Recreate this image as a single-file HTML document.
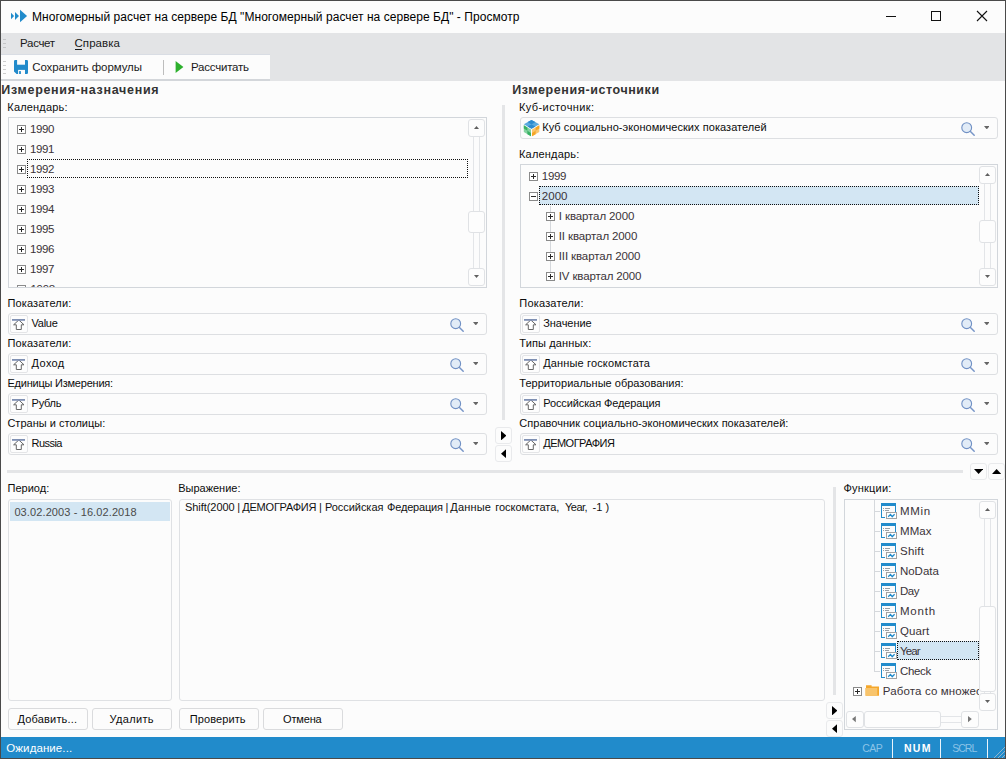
<!DOCTYPE html>
<html><head><meta charset="utf-8"><title>Многомерный расчет на сервере БД</title>
<style>
html,body{margin:0;padding:0;}
body{width:1006px;height:759px;overflow:hidden;background:#fcfcfc;position:relative;
 font-family:"Liberation Sans",sans-serif;font-size:11px;color:#0c0c0c;}
div,span,svg{position:absolute;box-sizing:border-box;}
.t{white-space:nowrap;line-height:14px;height:14px;}
.title{left:0;top:0;width:1006px;height:33px;background:#fcfcfc;}
.menu{left:0;top:33px;width:1006px;height:22px;background:#e3e4e6;}
.tbgrey{left:0;top:54px;width:1006px;height:27px;background:#e3e4e6;}
.tbwhite{left:1px;top:55px;width:269px;height:24px;background:#fcfcfc;}
.tbline{left:1px;top:79px;width:269px;height:2px;background:#d3d6da;}
.tbtop{left:1px;top:54px;width:269px;height:1px;background:#d9dde4;}
.frame{left:0;top:0;width:1006px;height:759px;border:1px solid #4a4a4a;}
.box{border:1px solid #d2d6db;background:#fcfcfc;}
.combo{border:1px solid #dddfe2;background:#fcfcfc;border-radius:3px;height:22px;}
.ib{width:18px;height:18px;border:1px solid #e4e5e7;border-radius:2px;background:#fdfdfd;}
.btn{border:1px solid #dadbdd;background:#fcfcfc;border-radius:3px;height:22px;}
.sb{border:1px solid #e0e2e5;background:#fdfdfd;border-radius:3px;}
.sb2{border:1px solid #e9eaec;background:#fcfcfc;border-radius:3px;}
.trk{background:#e3e5e8;}
.exp{width:9px;height:9px;border:1px solid #8a8a8a;background:#fff;}
.exp i{position:absolute;left:1px;top:3px;width:5px;height:1px;background:#2a2a2a;}
.exp b{position:absolute;left:3px;top:1px;width:1px;height:5px;background:#2a2a2a;}
.status{left:0;top:737px;width:1006px;height:22px;background:#218bcb;}
.hd{font-weight:bold;color:#333;}
.sel{background:#d3e6f3;}
.focus{border:1px dotted #111;}
.spl{background:#e4e5e7;}
.tr{color:#3a3338;}
.vdot{width:1px;background:#d5d8dc;}
.hdot{height:1px;background:#d5d8dc;}
</style></head>
<body>
<div class="title"></div><div class="menu"></div><div class="tbgrey"></div><div class="tbwhite"></div><div class="tbline"></div><div class="tbtop"></div>
<svg style="left:10px;top:9px" width="18" height="14" viewBox="10 9 18 14"><g fill="#218bcb"><path d="M11 12.8 L14.1 16 L11 19.2Z"/><path d="M15 11.9 L19 16 L15 20.1Z"/><path d="M20 9.8 L27.1 16 L20 22.2Z"/></g></svg>
<div class="t " style="left:32.0px;top:10px;font-size:12px;letter-spacing:0.05px;color:#000;">Многомерный расчет на сервере БД "Многомерный расчет на сервере БД" - Просмотр</div>
<div style="left:886px;top:16px;width:10px;height:1px;background:#111"></div>
<div style="left:931px;top:11px;width:10px;height:10px;border:1px solid #111"></div>
<svg style="left:976px;top:10px" width="12" height="12" viewBox="0 0 12 12"><path d="M1 1 L11 11 M11 1 L1 11" stroke="#111" stroke-width="1.1" fill="none"/></svg>
<div style="left:3px;top:39px;width:3px;height:1px;background:#c4c5c7"></div>
<div style="left:3px;top:43px;width:3px;height:1px;background:#c4c5c7"></div>
<div style="left:3px;top:47px;width:3px;height:1px;background:#c4c5c7"></div>
<div class="t " style="left:20.1px;top:36px;font-size:11.5px;letter-spacing:-0.32px;color:#1a1a1a;">Расчет</div>
<div class="t " style="left:74.5px;top:36px;font-size:11.5px;letter-spacing:0.05px;color:#1a1a1a;">Справка</div>
<div style="left:75px;top:49px;width:7px;height:1px;background:#1a1a1a"></div>
<div style="left:3px;top:61px;width:3px;height:1px;background:#cdcdcd"></div>
<div style="left:3px;top:65px;width:3px;height:1px;background:#cdcdcd"></div>
<div style="left:3px;top:69px;width:3px;height:1px;background:#cdcdcd"></div>
<div style="left:3px;top:73px;width:3px;height:1px;background:#cdcdcd"></div>
<svg style="left:14px;top:60px" width="14" height="14" viewBox="0 0 14 14"><path d="M1.2 0 H12.8 Q14 0 14 1.2 V12.8 Q14 14 12.8 14 H2.6 L0 11.4 V1.2 Q0 0 1.2 0Z" fill="#228bcb"/><rect x="3.1" y="0" width="7.9" height="4.7" fill="#fcfcfc"/><rect x="4.1" y="9.9" width="6.9" height="4.1" fill="#fcfcfc"/><rect x="5.1" y="11.1" width="1.8" height="2.9" fill="#228bcb"/></svg>
<div class="t " style="left:32.2px;top:59.5px;font-size:11.5px;letter-spacing:-0.08px;color:#1a1a1a;">Сохранить формулы</div>
<div style="left:163px;top:60px;width:1px;height:15px;background:#bdbdbd"></div>
<svg style="left:175px;top:61px" width="9" height="12" viewBox="0 0 9 12"><path d="M0.6 0 L8.4 6 L0.6 12Z" fill="#2db02d"/></svg>
<div class="t " style="left:191.0px;top:59.5px;font-size:11.5px;letter-spacing:-0.22px;color:#1a1a1a;">Рассчитать</div>
<div class="t hd" style="left:1.3px;top:82.5px;font-size:12.5px;letter-spacing:0.69px;">Измерения-назначения</div>
<div class="t " style="left:7.3px;top:99.5px;letter-spacing:0.18px;">Календарь:</div>
<div class="box" style="left:8px;top:117px;width:479px;height:171px;overflow:hidden"></div>
<div class="exp" style="left:17px;top:125px"><i></i><b></b></div>
<div class="t tr" style="left:30.1px;top:122px;font-size:11.5px;letter-spacing:-0.4px;">1990</div>
<div class="exp" style="left:17px;top:145px"><i></i><b></b></div>
<div class="t tr" style="left:30.1px;top:142px;font-size:11.5px;letter-spacing:-0.4px;">1991</div>
<div class="exp" style="left:17px;top:165px"><i></i><b></b></div>
<div class="t tr" style="left:30.1px;top:162px;font-size:11.5px;letter-spacing:-0.4px;">1992</div>
<div class="exp" style="left:17px;top:185px"><i></i><b></b></div>
<div class="t tr" style="left:30.1px;top:182px;font-size:11.5px;letter-spacing:-0.4px;">1993</div>
<div class="exp" style="left:17px;top:205px"><i></i><b></b></div>
<div class="t tr" style="left:30.1px;top:202px;font-size:11.5px;letter-spacing:-0.4px;">1994</div>
<div class="exp" style="left:17px;top:225px"><i></i><b></b></div>
<div class="t tr" style="left:30.1px;top:222px;font-size:11.5px;letter-spacing:-0.4px;">1995</div>
<div class="exp" style="left:17px;top:245px"><i></i><b></b></div>
<div class="t tr" style="left:30.1px;top:242px;font-size:11.5px;letter-spacing:-0.4px;">1996</div>
<div class="exp" style="left:17px;top:265px"><i></i><b></b></div>
<div class="t tr" style="left:30.1px;top:262px;font-size:11.5px;letter-spacing:-0.4px;">1997</div>
<div style="left:9px;top:281px;width:455px;height:6px;overflow:hidden"><div class="exp" style="left:8px;top:4px"><i></i><b></b></div><div class="t tr" style="left:21.5px;top:1px;font-size:11.5px;letter-spacing:-0.3px">1998</div></div>
<div class="focus" style="left:27px;top:159px;width:441px;height:19px"></div>
<div class="trk" style="left:473px;top:136px;width:1px;height:133px"></div>
<div class="trk" style="left:479px;top:136px;width:1px;height:133px"></div>
<div class="sb" style="left:468px;top:119px;width:17px;height:18px"></div>
<svg style="left:474px;top:126px" width="5" height="3" viewBox="0 0 5 3"><polygon points="0,3 2.5,0 5,3" fill="#606060"/></svg>
<div class="sb" style="left:468px;top:268px;width:17px;height:18px"></div>
<svg style="left:474px;top:275px" width="5" height="3" viewBox="0 0 5 3"><polygon points="0,0 5,0 2.5,3" fill="#606060"/></svg>
<div class="sb" style="left:468px;top:211px;width:17px;height:22px"></div>
<div class="t " style="left:7.4px;top:296px;letter-spacing:0.16px;">Показатели:</div>
<div class="combo" style="left:8px;top:313px;width:479px"></div>
<div class="ib" style="left:10px;top:315px"></div>
<svg style="left:10px;top:315px" width="18" height="18" viewBox="0 0 18 18"><path d="M8.8 5 L14 9.8 H11.3 V14.5 H6.3 V9.8 H3.6Z" fill="#fff" stroke="#666" stroke-width="1" stroke-linejoin="miter"/><rect x="2" y="4" width="13" height="1.8" fill="#7f90b3"/></svg>
<svg style="left:450px;top:318px" width="15" height="15" viewBox="0 0 15 15"><path d="M9.2 9.2 L13.2 13.2" stroke="#7896c8" stroke-width="1.5" stroke-linecap="round"/><circle cx="5.7" cy="5.7" r="4.9" fill="#e2ecf7" stroke="#7090c4" stroke-width="1.1"/></svg>
<svg style="left:472.8px;top:321.9px" width="5.6" height="3.4" viewBox="0 0 5.6 3.4"><polygon points="0,0 5.6,0 2.8,3.4" fill="#666"/></svg>
<div class="t " style="left:31.6px;top:316px;letter-spacing:-0.28px;">Value</div>
<div class="t " style="left:7.4px;top:336px;letter-spacing:0.16px;">Показатели:</div>
<div class="combo" style="left:8px;top:353px;width:479px"></div>
<div class="ib" style="left:10px;top:355px"></div>
<svg style="left:10px;top:355px" width="18" height="18" viewBox="0 0 18 18"><path d="M8.8 5 L14 9.8 H11.3 V14.5 H6.3 V9.8 H3.6Z" fill="#fff" stroke="#666" stroke-width="1" stroke-linejoin="miter"/><rect x="2" y="4" width="13" height="1.8" fill="#7f90b3"/></svg>
<svg style="left:450px;top:358px" width="15" height="15" viewBox="0 0 15 15"><path d="M9.2 9.2 L13.2 13.2" stroke="#7896c8" stroke-width="1.5" stroke-linecap="round"/><circle cx="5.7" cy="5.7" r="4.9" fill="#e2ecf7" stroke="#7090c4" stroke-width="1.1"/></svg>
<svg style="left:472.8px;top:361.9px" width="5.6" height="3.4" viewBox="0 0 5.6 3.4"><polygon points="0,0 5.6,0 2.8,3.4" fill="#666"/></svg>
<div class="t " style="left:31.6px;top:356px;letter-spacing:0.36px;">Доход</div>
<div class="t " style="left:7.4px;top:376px;letter-spacing:-0.22px;">Единицы Измерения:</div>
<div class="combo" style="left:8px;top:393px;width:479px"></div>
<div class="ib" style="left:10px;top:395px"></div>
<svg style="left:10px;top:395px" width="18" height="18" viewBox="0 0 18 18"><path d="M8.8 5 L14 9.8 H11.3 V14.5 H6.3 V9.8 H3.6Z" fill="#fff" stroke="#666" stroke-width="1" stroke-linejoin="miter"/><rect x="2" y="4" width="13" height="1.8" fill="#7f90b3"/></svg>
<svg style="left:450px;top:398px" width="15" height="15" viewBox="0 0 15 15"><path d="M9.2 9.2 L13.2 13.2" stroke="#7896c8" stroke-width="1.5" stroke-linecap="round"/><circle cx="5.7" cy="5.7" r="4.9" fill="#e2ecf7" stroke="#7090c4" stroke-width="1.1"/></svg>
<svg style="left:472.8px;top:401.9px" width="5.6" height="3.4" viewBox="0 0 5.6 3.4"><polygon points="0,0 5.6,0 2.8,3.4" fill="#666"/></svg>
<div class="t " style="left:31.6px;top:396px;letter-spacing:-0.26px;">Рубль</div>
<div class="t " style="left:7.4px;top:416px;letter-spacing:0.02px;">Страны и столицы:</div>
<div class="combo" style="left:8px;top:433px;width:479px"></div>
<div class="ib" style="left:10px;top:435px"></div>
<svg style="left:10px;top:435px" width="18" height="18" viewBox="0 0 18 18"><path d="M8.8 5 L14 9.8 H11.3 V14.5 H6.3 V9.8 H3.6Z" fill="#fff" stroke="#666" stroke-width="1" stroke-linejoin="miter"/><rect x="2" y="4" width="13" height="1.8" fill="#7f90b3"/></svg>
<svg style="left:450px;top:438px" width="15" height="15" viewBox="0 0 15 15"><path d="M9.2 9.2 L13.2 13.2" stroke="#7896c8" stroke-width="1.5" stroke-linecap="round"/><circle cx="5.7" cy="5.7" r="4.9" fill="#e2ecf7" stroke="#7090c4" stroke-width="1.1"/></svg>
<svg style="left:472.8px;top:441.9px" width="5.6" height="3.4" viewBox="0 0 5.6 3.4"><polygon points="0,0 5.6,0 2.8,3.4" fill="#666"/></svg>
<div class="t " style="left:31.6px;top:436px;letter-spacing:-0.55px;">Russia</div>
<div class="spl" style="left:502px;top:105px;width:3px;height:315px"></div>
<div class="spl" style="left:7px;top:470px;width:956px;height:3px"></div>
<div class="sb2" style="left:495px;top:427px;width:17px;height:17px"></div>
<svg style="left:500.8px;top:430.8px" width="5.4" height="9.4" viewBox="0 0 5.4 9.4"><polygon points="0,0 5.4,4.7 0,9.4" fill="#000"/></svg>
<div class="sb2" style="left:495px;top:445px;width:17px;height:17px"></div>
<svg style="left:500.8px;top:448.8px" width="5.4" height="9.4" viewBox="0 0 5.4 9.4"><polygon points="5.4,0 0,4.7 5.4,9.4" fill="#000"/></svg>
<div class="sb2" style="left:970px;top:463px;width:17px;height:17px"></div>
<svg style="left:974px;top:469px" width="9.2" height="5" viewBox="0 0 9.2 5"><polygon points="0,0 9.2,0 4.6,5" fill="#000"/></svg>
<div class="sb2" style="left:988px;top:463px;width:17px;height:17px"></div>
<svg style="left:992px;top:469px" width="9.2" height="5" viewBox="0 0 9.2 5"><polygon points="0,5 4.6,0 9.2,5" fill="#000"/></svg>
<div class="t hd" style="left:512.3px;top:82.5px;font-size:12.5px;letter-spacing:0.56px;">Измерения-источники</div>
<div class="t " style="left:519.0px;top:99.5px;letter-spacing:0.4px;">Куб-источник:</div>
<div class="combo" style="left:520px;top:117px;width:478px"></div>
<svg style="left:961px;top:122px" width="15" height="15" viewBox="0 0 15 15"><path d="M9.2 9.2 L13.2 13.2" stroke="#7896c8" stroke-width="1.5" stroke-linecap="round"/><circle cx="5.7" cy="5.7" r="4.9" fill="#e2ecf7" stroke="#7090c4" stroke-width="1.1"/></svg>
<svg style="left:983.8px;top:125.9px" width="5.6" height="3.4" viewBox="0 0 5.6 3.4"><polygon points="0,0 5.6,0 2.8,3.4" fill="#666"/></svg>
<svg style="left:523px;top:119px" width="17" height="18" viewBox="523 119 17 18"><polygon points="531.5,120 539.3,124.3 531.5,128.8 523.8,124.3" fill="#5aaade"/><polygon points="523.8,125.2 531,129.6 531,136.3 523.8,132" fill="#84d2a0"/><polygon points="532,129.6 539.3,125.2 539.3,132 532,136.3" fill="#f9c670"/><polygon points="531.5,120 535.4,122.1 531.5,124.4 527.6,122.1" fill="#2c8bcf"/><polygon points="531.5,124.4 535.4,126.5 531.5,128.8 527.6,126.5" fill="#2c8bcf"/><polygon points="523.8,125.2 527.4,127.4 527.4,130.8 523.8,128.6" fill="#37b264"/><polygon points="527.4,130.8 531,133 531,136.3 527.4,134.2" fill="#37b264"/><polygon points="535.6,127.4 539.3,125.2 539.3,128.6 535.6,130.8" fill="#f5a626"/><polygon points="532,133 535.6,130.8 535.6,134.2 532,136.3" fill="#f5a626"/></svg>
<div class="t " style="left:542.2px;top:119.69999999999999px;letter-spacing:0.05px;">Куб социально-экономических показателей</div>
<div class="t " style="left:519.0px;top:147px;letter-spacing:0.18px;">Календарь:</div>
<div class="box" style="left:520px;top:164px;width:478px;height:124px"></div>
<div class="sel" style="left:539px;top:186px;width:440px;height:19px"></div>
<div class="focus" style="left:539px;top:186px;width:440px;height:19px"></div>
<div class="exp" style="left:529px;top:172px"><i></i><b></b></div>
<div class="t tr" style="left:541.8px;top:169px;font-size:11.5px;letter-spacing:-0.3px;">1999</div>
<div class="exp" style="left:529px;top:192px"><i></i></div>
<div class="t tr" style="left:541.8px;top:189px;font-size:11.5px;letter-spacing:0.04px;">2000</div>
<div class="vdot" style="left:550px;top:206px;height:71px"></div>
<div class="exp" style="left:546px;top:212px"><i></i><b></b></div>
<div class="t tr" style="left:558.8px;top:209px;font-size:11.5px;letter-spacing:-0.11px;">I квартал 2000</div>
<div class="exp" style="left:546px;top:232px"><i></i><b></b></div>
<div class="t tr" style="left:558.8px;top:229px;font-size:11.5px;letter-spacing:-0.12px;">II квартал 2000</div>
<div class="exp" style="left:546px;top:252px"><i></i><b></b></div>
<div class="t tr" style="left:558.8px;top:249px;font-size:11.5px;letter-spacing:-0.12px;">III квартал 2000</div>
<div class="exp" style="left:546px;top:272px"><i></i><b></b></div>
<div class="t tr" style="left:558.8px;top:269px;font-size:11.5px;letter-spacing:-0.14px;">IV квартал 2000</div>
<div class="trk" style="left:984px;top:183px;width:1px;height:86px"></div>
<div class="trk" style="left:990px;top:183px;width:1px;height:86px"></div>
<div class="sb" style="left:979px;top:166px;width:17px;height:18px"></div>
<svg style="left:985px;top:173px" width="5" height="3" viewBox="0 0 5 3"><polygon points="0,3 2.5,0 5,3" fill="#606060"/></svg>
<div class="sb" style="left:979px;top:268px;width:17px;height:18px"></div>
<svg style="left:985px;top:275px" width="5" height="3" viewBox="0 0 5 3"><polygon points="0,0 5,0 2.5,3" fill="#606060"/></svg>
<div class="sb" style="left:979px;top:220px;width:17px;height:23px"></div>
<div class="t " style="left:519.3px;top:296px;letter-spacing:0.19px;">Показатели:</div>
<div class="combo" style="left:520px;top:313px;width:478px"></div>
<div class="ib" style="left:522px;top:315px"></div>
<svg style="left:522px;top:315px" width="18" height="18" viewBox="0 0 18 18"><path d="M8.8 5 L14 9.8 H11.3 V14.5 H6.3 V9.8 H3.6Z" fill="#fff" stroke="#666" stroke-width="1" stroke-linejoin="miter"/><rect x="2" y="4" width="13" height="1.8" fill="#7f90b3"/></svg>
<svg style="left:961px;top:318px" width="15" height="15" viewBox="0 0 15 15"><path d="M9.2 9.2 L13.2 13.2" stroke="#7896c8" stroke-width="1.5" stroke-linecap="round"/><circle cx="5.7" cy="5.7" r="4.9" fill="#e2ecf7" stroke="#7090c4" stroke-width="1.1"/></svg>
<svg style="left:983.8px;top:321.9px" width="5.6" height="3.4" viewBox="0 0 5.6 3.4"><polygon points="0,0 5.6,0 2.8,3.4" fill="#666"/></svg>
<div class="t " style="left:543.2px;top:316px;letter-spacing:-0.05px;">Значение</div>
<div class="t " style="left:519.3px;top:336px;letter-spacing:0.14px;">Типы данных:</div>
<div class="combo" style="left:520px;top:353px;width:478px"></div>
<div class="ib" style="left:522px;top:355px"></div>
<svg style="left:522px;top:355px" width="18" height="18" viewBox="0 0 18 18"><path d="M8.8 5 L14 9.8 H11.3 V14.5 H6.3 V9.8 H3.6Z" fill="#fff" stroke="#666" stroke-width="1" stroke-linejoin="miter"/><rect x="2" y="4" width="13" height="1.8" fill="#7f90b3"/></svg>
<svg style="left:961px;top:358px" width="15" height="15" viewBox="0 0 15 15"><path d="M9.2 9.2 L13.2 13.2" stroke="#7896c8" stroke-width="1.5" stroke-linecap="round"/><circle cx="5.7" cy="5.7" r="4.9" fill="#e2ecf7" stroke="#7090c4" stroke-width="1.1"/></svg>
<svg style="left:983.8px;top:361.9px" width="5.6" height="3.4" viewBox="0 0 5.6 3.4"><polygon points="0,0 5.6,0 2.8,3.4" fill="#666"/></svg>
<div class="t " style="left:543.2px;top:356px;letter-spacing:0.15px;">Данные госкомстата</div>
<div class="t " style="left:519.3px;top:376px;letter-spacing:0.01px;">Территориальные образования:</div>
<div class="combo" style="left:520px;top:393px;width:478px"></div>
<div class="ib" style="left:522px;top:395px"></div>
<svg style="left:522px;top:395px" width="18" height="18" viewBox="0 0 18 18"><path d="M8.8 5 L14 9.8 H11.3 V14.5 H6.3 V9.8 H3.6Z" fill="#fff" stroke="#666" stroke-width="1" stroke-linejoin="miter"/><rect x="2" y="4" width="13" height="1.8" fill="#7f90b3"/></svg>
<svg style="left:961px;top:398px" width="15" height="15" viewBox="0 0 15 15"><path d="M9.2 9.2 L13.2 13.2" stroke="#7896c8" stroke-width="1.5" stroke-linecap="round"/><circle cx="5.7" cy="5.7" r="4.9" fill="#e2ecf7" stroke="#7090c4" stroke-width="1.1"/></svg>
<svg style="left:983.8px;top:401.9px" width="5.6" height="3.4" viewBox="0 0 5.6 3.4"><polygon points="0,0 5.6,0 2.8,3.4" fill="#666"/></svg>
<div class="t " style="left:543.2px;top:396px;letter-spacing:-0.11px;">Российская Федерация</div>
<div class="t " style="left:519.3px;top:416px;letter-spacing:0.03px;">Справочник социально-экономических показателей:</div>
<div class="combo" style="left:520px;top:433px;width:478px"></div>
<div class="ib" style="left:522px;top:435px"></div>
<svg style="left:522px;top:435px" width="18" height="18" viewBox="0 0 18 18"><path d="M8.8 5 L14 9.8 H11.3 V14.5 H6.3 V9.8 H3.6Z" fill="#fff" stroke="#666" stroke-width="1" stroke-linejoin="miter"/><rect x="2" y="4" width="13" height="1.8" fill="#7f90b3"/></svg>
<svg style="left:961px;top:438px" width="15" height="15" viewBox="0 0 15 15"><path d="M9.2 9.2 L13.2 13.2" stroke="#7896c8" stroke-width="1.5" stroke-linecap="round"/><circle cx="5.7" cy="5.7" r="4.9" fill="#e2ecf7" stroke="#7090c4" stroke-width="1.1"/></svg>
<svg style="left:983.8px;top:441.9px" width="5.6" height="3.4" viewBox="0 0 5.6 3.4"><polygon points="0,0 5.6,0 2.8,3.4" fill="#666"/></svg>
<div class="t " style="left:543.2px;top:436px;letter-spacing:-0.51px;">ДЕМОГРАФИЯ</div>
<div class="t " style="left:7.5px;top:481px;letter-spacing:0.01px;">Период:</div>
<div class="box" style="left:8px;top:499px;width:164px;height:202px;border-radius:3px;border-color:#dfe1e4"></div>
<div class="sel" style="left:10px;top:502px;width:160px;height:19px"></div>
<div class="t " style="left:14.4px;top:505px;letter-spacing:0.11px;color:#4a4a4a;">03.02.2003 - 16.02.2018</div>
<div class="t " style="left:178.2px;top:481px;letter-spacing:-0.01px;">Выражение:</div>
<div class="box" style="left:179px;top:499px;width:646px;height:202px;border-radius:3px;border-color:#dfe1e4"></div>
<div class="t " style="left:185.0px;top:500px;letter-spacing:-0.05px;color:#111;">Shift(2000</div>
<div class="t " style="left:237.2px;top:500px;color:#111;">|</div>
<div class="t " style="left:242.3px;top:500px;letter-spacing:-0.23px;color:#111;">ДЕМОГРАФИЯ</div>
<div class="t " style="left:319.0px;top:500px;color:#111;">|</div>
<div class="t " style="left:324.9px;top:500px;letter-spacing:-0.04px;color:#111;">Российская</div>
<div class="t " style="left:387.1px;top:500px;letter-spacing:-0.19px;color:#111;">Федерация</div>
<div class="t " style="left:445.4px;top:500px;color:#111;">|</div>
<div class="t " style="left:450.3px;top:500px;letter-spacing:0.17px;color:#111;">Данные</div>
<div class="t " style="left:495.2px;top:500px;letter-spacing:-0.02px;color:#111;">госкомстата,</div>
<div class="t " style="left:565.1px;top:500px;letter-spacing:-0.57px;color:#111;">Year,</div>
<div class="t " style="left:592.5px;top:500px;letter-spacing:0.02px;color:#111;">-1</div>
<div class="t " style="left:605.5px;top:500px;color:#111;">)</div>
<div class="btn" style="left:8px;top:708px;width:80px"></div>
<div class="t " style="left:17.4px;top:712px;letter-spacing:0.19px;">Добавить...</div>
<div class="btn" style="left:92px;top:708px;width:80px"></div>
<div class="t " style="left:109.5px;top:712px;letter-spacing:0.33px;">Удалить</div>
<div class="btn" style="left:179px;top:708px;width:80px"></div>
<div class="t " style="left:189.7px;top:712px;letter-spacing:0.11px;">Проверить</div>
<div class="btn" style="left:263px;top:708px;width:80px"></div>
<div class="t " style="left:283.1px;top:712px;letter-spacing:-0.17px;">Отмена</div>
<div class="spl" style="left:833px;top:487px;width:3px;height:208px"></div>
<div class="sb2" style="left:826px;top:702px;width:17px;height:17px"></div>
<svg style="left:831.8px;top:705.8px" width="5.4" height="9.4" viewBox="0 0 5.4 9.4"><polygon points="0,0 5.4,4.7 0,9.4" fill="#000"/></svg>
<div class="sb2" style="left:826px;top:720px;width:17px;height:17px"></div>
<svg style="left:831.8px;top:723.7px" width="5.4" height="9.4" viewBox="0 0 5.4 9.4"><polygon points="5.4,0 0,4.7 5.4,9.4" fill="#000"/></svg>
<div class="t " style="left:843.5px;top:481px;letter-spacing:0.2px;">Функции:</div>
<div class="box" style="left:844px;top:499px;width:154px;height:231px"></div>
<div class="vdot" style="left:874px;top:500px;height:172px"></div>
<div class="hdot" style="left:875px;top:511px;width:5px"></div>
<svg style="left:881px;top:503px" width="17" height="16" viewBox="0 0 17 16"><path d="M0 0 H15 V9 H14 V3 H1 V14 H4 V15 H0Z" fill="#218bcb"/><rect x="2" y="5" width="1" height="1" fill="#9aa0a6"/><rect x="4" y="5" width="5" height="1" fill="#9aa0a6"/><rect x="2" y="7" width="1" height="1" fill="#9aa0a6"/><rect x="4" y="7" width="4" height="1" fill="#9aa0a6"/><rect x="5.5" y="9.5" width="10" height="6" fill="#fff" stroke="#a3a3a3" stroke-width="1"/><path d="M7.2 13.8 L9.5 11.4 L11.2 13.7 L13.6 11.3" fill="none" stroke="#218bcb" stroke-width="1.3"/></svg>
<div class="t tr" style="left:900.0px;top:504px;font-size:11.5px;letter-spacing:0.66px;">MMin</div>
<div class="hdot" style="left:875px;top:531px;width:5px"></div>
<svg style="left:881px;top:523px" width="17" height="16" viewBox="0 0 17 16"><path d="M0 0 H15 V9 H14 V3 H1 V14 H4 V15 H0Z" fill="#218bcb"/><rect x="2" y="5" width="1" height="1" fill="#9aa0a6"/><rect x="4" y="5" width="5" height="1" fill="#9aa0a6"/><rect x="2" y="7" width="1" height="1" fill="#9aa0a6"/><rect x="4" y="7" width="4" height="1" fill="#9aa0a6"/><rect x="5.5" y="9.5" width="10" height="6" fill="#fff" stroke="#a3a3a3" stroke-width="1"/><path d="M7.2 13.8 L9.5 11.4 L11.2 13.7 L13.6 11.3" fill="none" stroke="#218bcb" stroke-width="1.3"/></svg>
<div class="t tr" style="left:900.0px;top:524px;font-size:11.5px;letter-spacing:0.06px;">MMax</div>
<div class="hdot" style="left:875px;top:551px;width:5px"></div>
<svg style="left:881px;top:543px" width="17" height="16" viewBox="0 0 17 16"><path d="M0 0 H15 V9 H14 V3 H1 V14 H4 V15 H0Z" fill="#218bcb"/><rect x="2" y="5" width="1" height="1" fill="#9aa0a6"/><rect x="4" y="5" width="5" height="1" fill="#9aa0a6"/><rect x="2" y="7" width="1" height="1" fill="#9aa0a6"/><rect x="4" y="7" width="4" height="1" fill="#9aa0a6"/><rect x="5.5" y="9.5" width="10" height="6" fill="#fff" stroke="#a3a3a3" stroke-width="1"/><path d="M7.2 13.8 L9.5 11.4 L11.2 13.7 L13.6 11.3" fill="none" stroke="#218bcb" stroke-width="1.3"/></svg>
<div class="t tr" style="left:900.0px;top:544px;font-size:11.5px;letter-spacing:0.25px;">Shift</div>
<div class="hdot" style="left:875px;top:571px;width:5px"></div>
<svg style="left:881px;top:563px" width="17" height="16" viewBox="0 0 17 16"><path d="M0 0 H15 V9 H14 V3 H1 V14 H4 V15 H0Z" fill="#218bcb"/><rect x="2" y="5" width="1" height="1" fill="#9aa0a6"/><rect x="4" y="5" width="5" height="1" fill="#9aa0a6"/><rect x="2" y="7" width="1" height="1" fill="#9aa0a6"/><rect x="4" y="7" width="4" height="1" fill="#9aa0a6"/><rect x="5.5" y="9.5" width="10" height="6" fill="#fff" stroke="#a3a3a3" stroke-width="1"/><path d="M7.2 13.8 L9.5 11.4 L11.2 13.7 L13.6 11.3" fill="none" stroke="#218bcb" stroke-width="1.3"/></svg>
<div class="t tr" style="left:900.0px;top:564px;font-size:11.5px;letter-spacing:-0.04px;">NoData</div>
<div class="hdot" style="left:875px;top:591px;width:5px"></div>
<svg style="left:881px;top:583px" width="17" height="16" viewBox="0 0 17 16"><path d="M0 0 H15 V9 H14 V3 H1 V14 H4 V15 H0Z" fill="#218bcb"/><rect x="2" y="5" width="1" height="1" fill="#9aa0a6"/><rect x="4" y="5" width="5" height="1" fill="#9aa0a6"/><rect x="2" y="7" width="1" height="1" fill="#9aa0a6"/><rect x="4" y="7" width="4" height="1" fill="#9aa0a6"/><rect x="5.5" y="9.5" width="10" height="6" fill="#fff" stroke="#a3a3a3" stroke-width="1"/><path d="M7.2 13.8 L9.5 11.4 L11.2 13.7 L13.6 11.3" fill="none" stroke="#218bcb" stroke-width="1.3"/></svg>
<div class="t tr" style="left:900.0px;top:584px;font-size:11.5px;letter-spacing:-0.48px;">Day</div>
<div class="hdot" style="left:875px;top:611px;width:5px"></div>
<svg style="left:881px;top:603px" width="17" height="16" viewBox="0 0 17 16"><path d="M0 0 H15 V9 H14 V3 H1 V14 H4 V15 H0Z" fill="#218bcb"/><rect x="2" y="5" width="1" height="1" fill="#9aa0a6"/><rect x="4" y="5" width="5" height="1" fill="#9aa0a6"/><rect x="2" y="7" width="1" height="1" fill="#9aa0a6"/><rect x="4" y="7" width="4" height="1" fill="#9aa0a6"/><rect x="5.5" y="9.5" width="10" height="6" fill="#fff" stroke="#a3a3a3" stroke-width="1"/><path d="M7.2 13.8 L9.5 11.4 L11.2 13.7 L13.6 11.3" fill="none" stroke="#218bcb" stroke-width="1.3"/></svg>
<div class="t tr" style="left:900.0px;top:604px;font-size:11.5px;letter-spacing:0.78px;">Month</div>
<div class="hdot" style="left:875px;top:631px;width:5px"></div>
<svg style="left:881px;top:623px" width="17" height="16" viewBox="0 0 17 16"><path d="M0 0 H15 V9 H14 V3 H1 V14 H4 V15 H0Z" fill="#218bcb"/><rect x="2" y="5" width="1" height="1" fill="#9aa0a6"/><rect x="4" y="5" width="5" height="1" fill="#9aa0a6"/><rect x="2" y="7" width="1" height="1" fill="#9aa0a6"/><rect x="4" y="7" width="4" height="1" fill="#9aa0a6"/><rect x="5.5" y="9.5" width="10" height="6" fill="#fff" stroke="#a3a3a3" stroke-width="1"/><path d="M7.2 13.8 L9.5 11.4 L11.2 13.7 L13.6 11.3" fill="none" stroke="#218bcb" stroke-width="1.3"/></svg>
<div class="t tr" style="left:900.0px;top:624px;font-size:11.5px;letter-spacing:0.11px;">Quart</div>
<div class="hdot" style="left:875px;top:651px;width:5px"></div>
<div class="sel" style="left:897px;top:641px;width:82px;height:19px"></div>
<div class="focus" style="left:897px;top:641px;width:82px;height:19px"></div>
<svg style="left:881px;top:643px" width="17" height="16" viewBox="0 0 17 16"><path d="M0 0 H15 V9 H14 V3 H1 V14 H4 V15 H0Z" fill="#218bcb"/><rect x="2" y="5" width="1" height="1" fill="#9aa0a6"/><rect x="4" y="5" width="5" height="1" fill="#9aa0a6"/><rect x="2" y="7" width="1" height="1" fill="#9aa0a6"/><rect x="4" y="7" width="4" height="1" fill="#9aa0a6"/><rect x="5.5" y="9.5" width="10" height="6" fill="#fff" stroke="#a3a3a3" stroke-width="1"/><path d="M7.2 13.8 L9.5 11.4 L11.2 13.7 L13.6 11.3" fill="none" stroke="#218bcb" stroke-width="1.3"/></svg>
<div class="t tr" style="left:900.0px;top:644px;font-size:11.5px;letter-spacing:-0.92px;">Year</div>
<div class="hdot" style="left:875px;top:671px;width:5px"></div>
<svg style="left:881px;top:663px" width="17" height="16" viewBox="0 0 17 16"><path d="M0 0 H15 V9 H14 V3 H1 V14 H4 V15 H0Z" fill="#218bcb"/><rect x="2" y="5" width="1" height="1" fill="#9aa0a6"/><rect x="4" y="5" width="5" height="1" fill="#9aa0a6"/><rect x="2" y="7" width="1" height="1" fill="#9aa0a6"/><rect x="4" y="7" width="4" height="1" fill="#9aa0a6"/><rect x="5.5" y="9.5" width="10" height="6" fill="#fff" stroke="#a3a3a3" stroke-width="1"/><path d="M7.2 13.8 L9.5 11.4 L11.2 13.7 L13.6 11.3" fill="none" stroke="#218bcb" stroke-width="1.3"/></svg>
<div class="t tr" style="left:900.0px;top:664px;font-size:11.5px;letter-spacing:-0.33px;">Check</div>
<div class="exp" style="left:853px;top:687px"><i></i><b></b></div>
<svg style="left:865px;top:684px" width="15" height="13" viewBox="0 0 15 13"><path d="M1 1.2 H6.6 V2.4 H14 V11.8 H1Z" fill="#f5a72a"/><path d="M0.2 4 H12.3 V11.8 H0.2Z" fill="#f8c46c"/></svg>
<div style="left:880px;top:682px;width:99px;height:18px;overflow:hidden"><div class="t tr" style="left:2.8px;top:2px;font-size:11.5px;letter-spacing:0.14px">Работа со множеством</div></div>
<div class="trk" style="left:984px;top:518px;width:1px;height:176px"></div>
<div class="trk" style="left:990px;top:518px;width:1px;height:176px"></div>
<div class="sb" style="left:979px;top:501px;width:17px;height:18px"></div>
<svg style="left:985px;top:508px" width="5" height="3" viewBox="0 0 5 3"><polygon points="0,3 2.5,0 5,3" fill="#606060"/></svg>
<div class="sb" style="left:979px;top:693px;width:17px;height:18px"></div>
<svg style="left:985px;top:700px" width="5" height="3" viewBox="0 0 5 3"><polygon points="0,0 5,0 2.5,3" fill="#606060"/></svg>
<div class="sb" style="left:979px;top:606px;width:17px;height:86px"></div>
<div class="trk" style="left:863px;top:716px;width:99px;height:1px"></div>
<div class="trk" style="left:863px;top:722px;width:99px;height:1px"></div>
<div class="sb" style="left:846px;top:711px;width:18px;height:17px"></div>
<svg style="left:852.2px;top:716.4px" width="3.8" height="6.2" viewBox="0 0 3.8 6.2"><polygon points="3.8,0 0,3.1 3.8,6.2" fill="#777"/></svg>
<div class="sb" style="left:961px;top:711px;width:18px;height:17px"></div>
<svg style="left:968px;top:716.4px" width="3.8" height="6.2" viewBox="0 0 3.8 6.2"><polygon points="0,0 3.8,3.1 0,6.2" fill="#777"/></svg>
<div class="sb" style="left:864px;top:711px;width:77px;height:17px"></div>
<div class="status"></div>
<div class="t " style="left:6.3px;top:741px;font-size:11.5px;letter-spacing:0.09px;color:#fff;">Ожидание...</div>
<div class="t " style="left:862.2px;top:740.5px;font-size:10.5px;letter-spacing:-0.5px;color:#8cc3e7;">CAP</div>
<div class="t " style="left:904.1px;top:740.5px;font-size:10.5px;font-weight:bold;letter-spacing:1.19px;color:#fff;">NUM</div>
<div class="t " style="left:952.2px;top:740.5px;font-size:10.5px;letter-spacing:-0.97px;color:#8cc3e7;">SCRL</div>
<div style="left:892px;top:739px;width:1px;height:19px;background:#eaf4fb"></div>
<div style="left:940px;top:739px;width:1px;height:19px;background:#eaf4fb"></div>
<div style="left:987px;top:739px;width:1px;height:19px;background:#eaf4fb"></div>
<svg style="left:993px;top:746px" width="12" height="12" viewBox="0 0 12 12"><path d="M1 12 L12 1 M5 12 L12 5 M9 12 L12 9" stroke="#8fb3cb" stroke-width="1" fill="none"/></svg>
<div class="frame"></div>
</body></html>
